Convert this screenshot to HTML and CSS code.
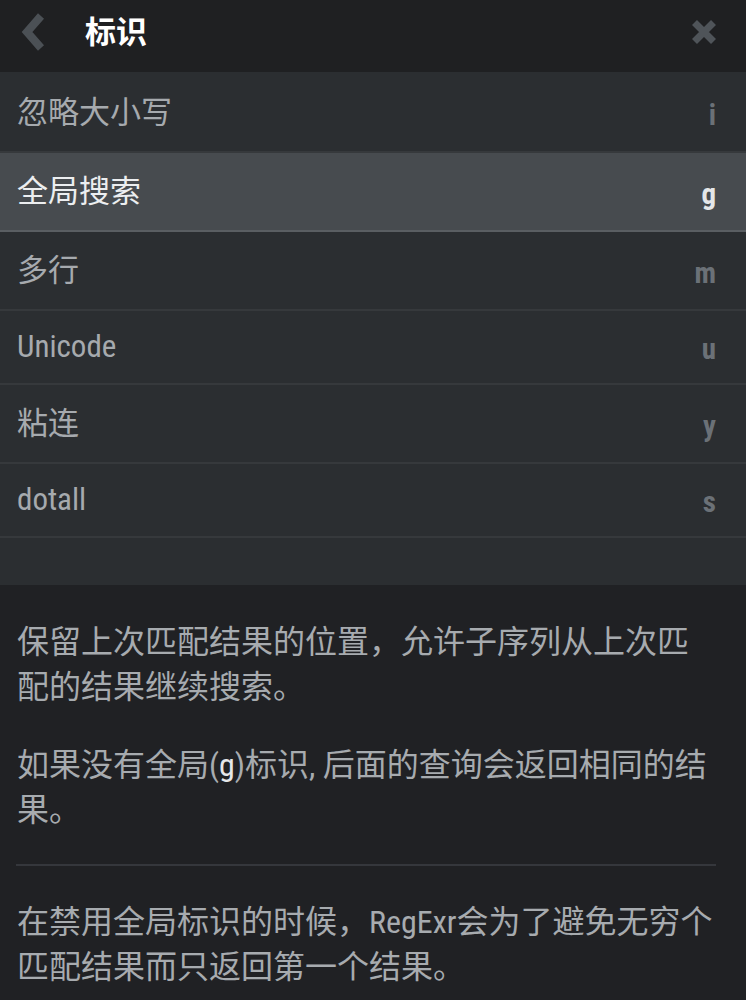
FILE: index.html
```html
<!DOCTYPE html>
<html lang="zh-CN">
<head>
<meta charset="utf-8">
<title>标识</title>
<link rel="stylesheet" href="styles.css">
</head>
<body>
<div class="panel">
  <header class="topbar">
    <svg class="back" width="50" height="72" viewBox="0 0 50 72" aria-hidden="true">
      <polyline points="41,16 27,32 41,48" fill="none" stroke="#4b5055" stroke-width="8" stroke-linejoin="miter" stroke-miterlimit="10"/>
    </svg>
    <h1 class="title">标识</h1>
    <svg class="close" width="60" height="72" viewBox="0 0 60 72" aria-hidden="true">
      <path d="M8.5 22.5 L27.5 41.5 M27.5 22.5 L8.5 41.5" fill="none" stroke="#4f5459" stroke-width="7" stroke-linecap="butt"/>
    </svg>
  </header>

  <ul class="flags">
    <li class="row"><span class="label">忽略大小写</span><span class="flag">i</span></li>
    <li class="row active"><span class="label">全局搜索</span><span class="flag">g</span></li>
    <li class="row"><span class="label">多行</span><span class="flag">m</span></li>
    <li class="row latin"><span class="label">Unicode</span><span class="flag">u</span></li>
    <li class="row"><span class="label">粘连</span><span class="flag">y</span></li>
    <li class="row latin"><span class="label">dotall</span><span class="flag">s</span></li>
  </ul>

  <section class="desc">
    <p>保留上次匹配结果的位置，允许子序列从上次匹配的结果继续搜索。</p>
    <p>如果没有全局(<span class="hl">g</span>)标识, 后面的查询会返回相同的结果。</p>
    <hr class="divider">
    <p>在禁用全局标识的时候，RegExr会为了避免无穷个匹配结果而只返回第一个结果。</p>
  </section>
</div>
</body>
</html>
```

FILE: styles.css
```css
html, body {
  margin: 0;
  padding: 0;
  background: #202124;
}

body {
  font-family: Roboto, "Noto Sans CJK SC", sans-serif;
  font-stretch: 87.5%;
  -webkit-font-smoothing: antialiased;
}

.panel {
  width: 746px;
}

.topbar {
  display: flex;
  align-items: center;
  height: 72px;
  background: #1f2022;
}

.back {
  display: block;
  flex: none;
}

.title {
  margin: 0 0 0 35px;
  font-size: 31px;
  font-weight: 700;
  line-height: 72px;
  color: #ffffff;
  position: relative;
  top: -3px;
}

.close {
  display: block;
  flex: none;
  margin-left: auto;
}

.flags {
  list-style: none;
  margin: 0;
  padding: 0 0 47px;
  background: #2b2e31;
}

.row {
  display: flex;
  align-items: center;
  justify-content: space-between;
  padding: 20px 30px 20px 17px;
  line-height: 37px;
  border-bottom: 2px solid #36393c;
  color: #a6aaae;
  font-size: 31px;
}

.row:first-child {
  padding-top: 22px;
}

.row.latin {
  line-height: 32px;
}

.row.active {
  background: #474b4f;
  color: #eceef0;
  border-bottom-color: #5a5e62;
}

.flag {
  font-weight: 700;
  font-size: 29px;
  line-height: 32px;
  color: #6b7177;
  position: relative;
  top: 2px;
}

.row.active .flag {
  color: #e4e6e8;
}

.desc {
  padding: 35px 30px 20px 17px;
  color: #a7abaf;
  font-size: 32px;
  line-height: 45px;
}

.desc p {
  margin: 0 0 33px;
}

.desc .hl {
  color: #e6e7e9;
}

.divider {
  border: 0;
  height: 2px;
  margin: -2px 0 34px -1px;
  background: #35373c;
}
```
